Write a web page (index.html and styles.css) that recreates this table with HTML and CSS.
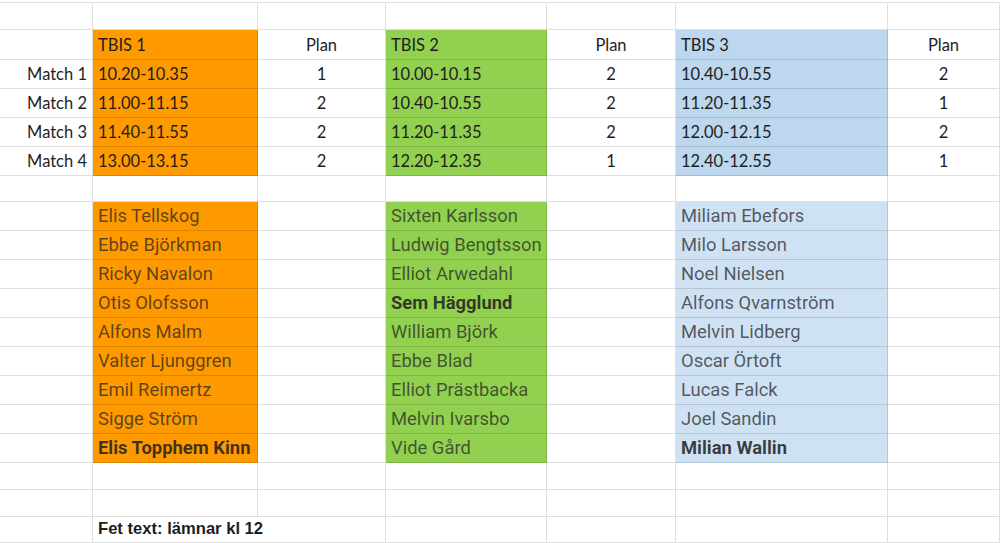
FILE: index.html
```html
<!DOCTYPE html>
<html lang="sv">
<head>
<meta charset="utf-8">
<title>TBIS</title>
<link rel="stylesheet" href="styles.css">
</head>
<body>
<div class="sheet">
  <!-- row 0 -->
  <div class="c r0"></div><div class="c r0"></div><div class="c r0"></div><div class="c r0"></div><div class="c r0"></div><div class="c r0"></div><div class="c r0"></div>
  <!-- row 1 -->
  <div class="c"></div><div class="c"></div><div class="c"></div><div class="c"></div><div class="c"></div><div class="c"></div><div class="c"></div>
  <!-- header -->
  <div class="c"></div>
  <div class="c top orange">TBIS 1</div>
  <div class="c top mid">Plan</div>
  <div class="c top green">TBIS 2</div>
  <div class="c top mid">Plan</div>
  <div class="c top blue">TBIS 3</div>
  <div class="c top mid">Plan</div>
  <!-- matches -->
  <div class="c top right">Match 1</div>
  <div class="c top orange">10.20-10.35</div>
  <div class="c top mid">1</div>
  <div class="c top green">10.00-10.15</div>
  <div class="c top mid">2</div>
  <div class="c top blue">10.40-10.55</div>
  <div class="c top mid">2</div>

  <div class="c top right">Match 2</div>
  <div class="c top orange">11.00-11.15</div>
  <div class="c top mid">2</div>
  <div class="c top green">10.40-10.55</div>
  <div class="c top mid">2</div>
  <div class="c top blue">11.20-11.35</div>
  <div class="c top mid">1</div>

  <div class="c top right">Match 3</div>
  <div class="c top orange">11.40-11.55</div>
  <div class="c top mid">2</div>
  <div class="c top green">11.20-11.35</div>
  <div class="c top mid">2</div>
  <div class="c top blue">12.00-12.15</div>
  <div class="c top mid">2</div>

  <div class="c top right">Match 4</div>
  <div class="c top orange">13.00-13.15</div>
  <div class="c top mid">2</div>
  <div class="c top green">12.20-12.35</div>
  <div class="c top mid">1</div>
  <div class="c top blue">12.40-12.55</div>
  <div class="c top mid">1</div>
  <!-- blank -->
  <div class="c"></div><div class="c"></div><div class="c"></div><div class="c"></div><div class="c"></div><div class="c"></div><div class="c"></div>
  <!-- names -->
  <div class="c"></div><div class="c nm orange">Elis Tellskog</div><div class="c"></div><div class="c nm green">Sixten Karlsson</div><div class="c"></div><div class="c nm lblue">Miliam Ebefors</div><div class="c"></div>
  <div class="c"></div><div class="c nm orange">Ebbe Björkman</div><div class="c"></div><div class="c nm green">Ludwig Bengtsson</div><div class="c"></div><div class="c nm lblue">Milo Larsson</div><div class="c"></div>
  <div class="c"></div><div class="c nm orange">Ricky Navalon</div><div class="c"></div><div class="c nm green">Elliot Arwedahl</div><div class="c"></div><div class="c nm lblue">Noel Nielsen</div><div class="c"></div>
  <div class="c"></div><div class="c nm orange">Otis Olofsson</div><div class="c"></div><div class="c nm green bold">Sem Hägglund</div><div class="c"></div><div class="c nm lblue">Alfons Qvarnström</div><div class="c"></div>
  <div class="c"></div><div class="c nm orange">Alfons Malm</div><div class="c"></div><div class="c nm green">William Björk</div><div class="c"></div><div class="c nm lblue">Melvin Lidberg</div><div class="c"></div>
  <div class="c"></div><div class="c nm orange">Valter Ljunggren</div><div class="c"></div><div class="c nm green">Ebbe Blad</div><div class="c"></div><div class="c nm lblue">Oscar Örtoft</div><div class="c"></div>
  <div class="c"></div><div class="c nm orange">Emil Reimertz</div><div class="c"></div><div class="c nm green">Elliot Prästbacka</div><div class="c"></div><div class="c nm lblue">Lucas Falck</div><div class="c"></div>
  <div class="c"></div><div class="c nm orange">Sigge Ström</div><div class="c"></div><div class="c nm green">Melvin Ivarsbo</div><div class="c"></div><div class="c nm lblue">Joel Sandin</div><div class="c"></div>
  <div class="c"></div><div class="c nm orange bold">Elis Topphem Kinn</div><div class="c"></div><div class="c nm green">Vide Gård</div><div class="c"></div><div class="c nm lblue bold">Milian Wallin</div><div class="c"></div>
  <!-- blank rows -->
  <div class="c"></div><div class="c"></div><div class="c"></div><div class="c"></div><div class="c"></div><div class="c"></div><div class="c"></div>
  <div class="c"></div><div class="c"></div><div class="c"></div><div class="c"></div><div class="c"></div><div class="c"></div><div class="c"></div>
  <!-- note -->
  <div class="c"></div><div class="c note">Fet text: lämnar kl 12</div><div class="c"></div><div class="c"></div><div class="c"></div><div class="c"></div><div class="c"></div>
</div>
</body>
</html>
```

FILE: styles.css
```css
html, body {
  margin: 0;
  padding: 0;
  background: #ffffff;
}

.sheet {
  display: grid;
  grid-template-columns: 93px 165px 128px 161px 129px 212px 112px;
  grid-template-rows: 3px 27px 30px 29px 29px 29px 29px 26px repeat(9, 29px) 27px 27px 26px;
  width: 1000px;
  height: 543px;
  overflow: hidden;
}

.c {
  box-sizing: border-box;
  border-right: 1px solid rgba(0, 0, 0, 0.13);
  border-bottom: 1px solid rgba(0, 0, 0, 0.13);
  display: flex;
  align-items: flex-end;
  white-space: nowrap;
  min-width: 0;
}

.r0 {
  border-right-color: transparent;
}

.top {
  font-family: "Lato", "Open Sans", sans-serif;
  font-size: 16.5px;
  color: #1e1e1e;
  padding: 0 5px 5px 5px;
  line-height: 18px;
}

.right {
  justify-content: flex-end;
}

.mid {
  justify-content: center;
}

.orange { background: #ff9900; }
.green { background: #92d050; }
.blue { background: #bdd7ee; }
.lblue { background: #cfe2f3; }

.nm {
  font-family: "Roboto", "Liberation Sans", sans-serif;
  font-size: 18.4px;
  color: rgba(35, 35, 35, 0.72);
  padding: 0 5px 4px 5px;
  line-height: 20px;
}

.bold {
  font-weight: 700;
  color: rgba(30, 30, 30, 0.85);
}

.note {
  font-family: "Liberation Sans", Arial, sans-serif;
  font-weight: 700;
  font-size: 16.6px;
  color: #1e1e1e;
  padding: 0 5px 4px 5px;
  line-height: 18px;
  border-right-color: transparent;
  overflow: visible;
}
```
